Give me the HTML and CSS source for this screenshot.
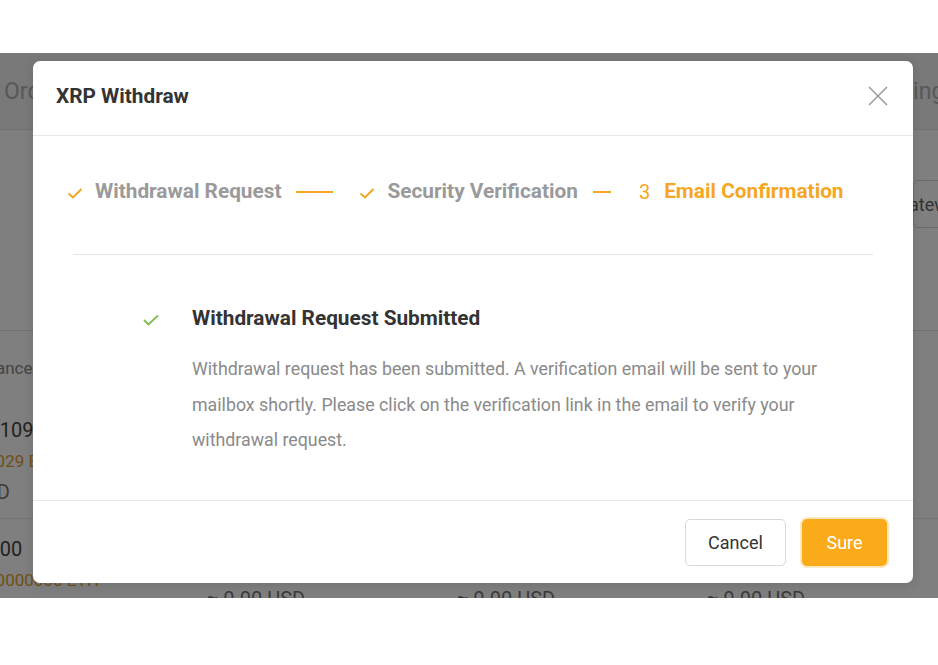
FILE: index.html
```html
<!DOCTYPE html>
<html>
<head>
<meta charset="utf-8">
<link rel="stylesheet" href="styles.css">
</head>
<body>
<div class="frame">
  <div class="page">
    <div class="tabs">
      <div class="tab">Orders</div>
      <div class="tab">Billing</div>
    </div>
    <div class="filters">
      <div class="select">Gateway</div>
    </div>
    <div class="assets">
      <div class="row head">
        <div class="cell">Balance</div>
        <div class="cell"></div>
        <div class="cell"></div>
        <div class="cell"></div>
      </div>
      <div class="row first">
        <div class="cell"><div class="val">10.109</div><div class="sub">0.0029 BTC</div><div class="usd">USD</div></div>
        <div class="cell"></div>
        <div class="cell"></div>
        <div class="cell"></div>
      </div>
      <div class="row second">
        <div class="cell"><div class="val">0.000</div><div class="sub">0.00000000 ETH</div><div class="usd">USD</div></div>
        <div class="cell mid"><div class="usd">≈ 0.00 USD</div></div>
        <div class="cell mid"><div class="usd">≈ 0.00 USD</div></div>
        <div class="cell mid"><div class="usd">≈ 0.00 USD</div></div>
      </div>
    </div>
  </div>
  <div class="overlay"></div>
  <div class="modal">
    <div class="modal-header">
      <div class="modal-title">XRP Withdraw</div>
      <svg class="close" width="20" height="20" viewBox="0 0 20 20"><path d="M1 1 L19 19 M19 1 L1 19" stroke="#9a9a9a" stroke-width="1.5" fill="none"/></svg>
    </div>
    <div class="modal-body">
      <div class="steps">
        <div class="step done">
          <svg class="step-check" width="16" height="12" viewBox="0 0 16 12"><path d="M1.5 6.5 L6 10.5 L14.5 2" stroke="#f5a623" stroke-width="2" fill="none"/></svg>
          <span>Withdrawal Request</span>
        </div>
        <div class="step-line long"></div>
        <div class="step done">
          <svg class="step-check" width="16" height="12" viewBox="0 0 16 12"><path d="M1.5 6.5 L6 10.5 L14.5 2" stroke="#f5a623" stroke-width="2" fill="none"/></svg>
          <span>Security Verification</span>
        </div>
        <div class="step-line short"></div>
        <div class="step active">
          <span class="step-num">3</span>
          <span>Email Confirmation</span>
        </div>
      </div>
      <div class="divider"></div>
      <div class="result">
        <svg class="result-check" width="16" height="12" viewBox="0 0 16 12"><path d="M1 6 L5.5 10.5 L15 1.5" stroke="#7cc04b" stroke-width="1.8" fill="none"/></svg>
        <div class="result-text">
          <div class="result-title">Withdrawal Request Submitted</div>
          <p class="result-desc">Withdrawal request has been submitted. A verification email will be sent to your mailbox shortly. Please click on the verification link in the email to verify your withdrawal request.</p>
        </div>
      </div>
    </div>
    <div class="modal-footer">
      <button class="btn btn-cancel">Cancel</button>
      <button class="btn btn-sure">Sure</button>
    </div>
  </div>
</div>
</body>
</html>
```
FILE: styles.css
```css
* { box-sizing: border-box; }
html, body { margin: 0; padding: 0; background: #fff; }
body { font-family: Roboto, "Noto Sans", sans-serif; }

.frame {
  margin-top: 53px;
  height: 545px;
  position: relative;
  overflow: hidden;
  background: #fff;
}

.page { width: 938px; }

.tabs {
  height: 77px;
  background: #f3f3f3;
  border-bottom: 1px solid #e2e2e2;
  display: grid;
  grid-template-columns: 880px 1fr;
  align-items: center;
  font-size: 23px;
  color: #b0b0b0;
  white-space: nowrap;
}
.tab:first-child { padding-left: 4px; }
.tab:last-child { margin-left: 2px; }

.filters {
  height: 201px;
  border-bottom: 1px solid #e2e2e2;
  display: flex;
  justify-content: flex-end;
  padding-top: 50px;
}
.select {
  width: 140px;
  height: 48px;
  margin-right: -115px;
  border: 1px solid #d8d8d8;
  border-radius: 4px;
  display: flex;
  align-items: center;
  justify-content: flex-end;
  padding-right: 86px;
  font-size: 18px;
  color: #666;
}

.assets { margin-left: -28px; }
.row {
  display: grid;
  grid-template-columns: 235px 250px 250px 250px;
  border-bottom: 1px solid #e8e8e8;
}
.row.head { padding: 25px 0 26px; font-size: 17px; line-height: 24px; color: #888; border-bottom: none; }
.row.first { padding: 9px 0 10px; }
.row.second { padding: 15px 0 10px; }
.row .cell { display: flex; flex-direction: column; white-space: nowrap; }
.row .cell.mid { padding-top: 50px; }
.val { font-size: 20px; color: #444; line-height: 31px; }
.sub { font-size: 17px; color: #e0a030; line-height: 31px; }
.usd { font-size: 20px; color: #777; line-height: 31px; }

.overlay {
  position: absolute;
  inset: 0;
  background: rgba(0, 0, 0, 0.5);
}

.modal {
  position: absolute;
  left: 33px;
  top: 8px;
  width: 880px;
  height: 522px;
  background: #fff;
  border-radius: 7px;
  display: flex;
  flex-direction: column;
  box-shadow: 0 2px 12px rgba(0,0,0,0.12);
}

.modal-header {
  height: 75px;
  flex: none;
  border-bottom: 1px solid #e8e8e8;
  display: flex;
  align-items: center;
  justify-content: space-between;
  padding: 0 25px 4px 23px;
}
.modal-title {
  font-size: 20.8px;
  font-weight: 700;
  color: #333;
}
.close { display: block; }

.modal-body {
  flex: 1;
  padding: 35px 40px 0;
}

.steps {
  height: 40px;
  display: flex;
  align-items: center;
  margin-left: -6px;
  font-size: 20.8px;
  font-weight: 700;
  color: #9a9a9a;
  white-space: nowrap;
}
.step { display: flex; align-items: center; }
.step-check { margin: 4px 12px 0 0; display: block; }
.step-num { font-weight: 400; margin-right: 14px; color: #f5a623; font-size: 20px; margin-top: 2px; }
.step.active { color: #f5a623; }
.step-line { height: 2px; background: #f5a623; margin-top: 2px; }
.step-line.long { width: 37px; margin-left: 15px; margin-right: 26px; }
.step-line.short { width: 18px; margin-left: 15px; margin-right: 28px; }

.divider {
  height: 1px;
  background: #e6e6e6;
  margin-top: 43px;
}

.result {
  display: flex;
  padding-left: 70px;
  margin-top: 49px;
}
.result-check { margin: 10px 33px 0 0; flex: none; }
.result-title {
  font-size: 20.8px;
  font-weight: 700;
  color: #333;
  line-height: 28px;
}
.result-desc {
  margin: 19px 0 0;
  font-size: 17.8px;
  line-height: 35.5px;
  color: #8a8a8a;
  width: 645px;
}

.modal-footer {
  height: 83px;
  flex: none;
  border-top: 1px solid #e8e8e8;
  display: flex;
  justify-content: flex-end;
  align-items: center;
  gap: 16px;
  padding: 0 26px 0 0;
}
.btn {
  height: 47px;
  border-radius: 5px;
  font-family: Roboto, sans-serif;
  font-size: 18px;
  padding: 0;
  cursor: pointer;
}
.btn-cancel {
  width: 101px;
  background: #fff;
  border: 1px solid #d9d9d9;
  color: #333;
}
.btn-sure {
  width: 85px;
  background: #fbab19;
  border: none;
  color: #fff;
  box-shadow: 0 0 0 2px #fde8c2;
}
```
